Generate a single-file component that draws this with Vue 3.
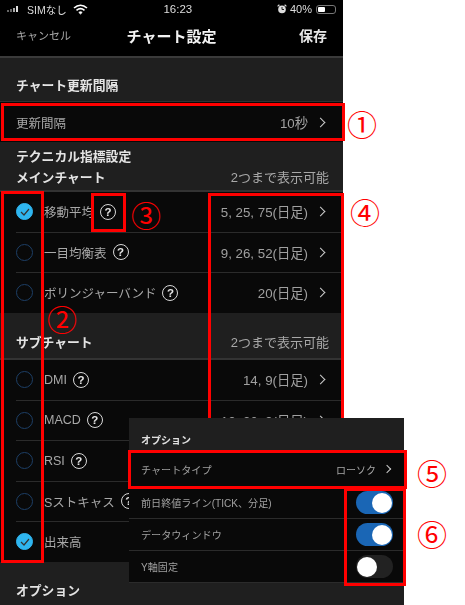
<template>
  <div class="stage">
    <div class="phone">
      <div class="status-bar">
        <div class="status-left">
          <svg class="signal" width="17" height="8" viewBox="0 0 17 8">
            <rect x="0" y="5" width="2" height="2" fill="#666" />
            <rect x="3" y="4" width="2" height="3" fill="#666" />
            <rect x="6" y="3" width="2" height="4" fill="#aaa" />
            <rect x="9" y="1" width="2" height="6" fill="#ddd" />
          </svg>
          <span class="carrier">SIMなし</span>
          <svg class="wifi" width="15" height="11" viewBox="0 0 15 11" fill="none" stroke="#fff" stroke-width="1.6">
            <path d="M1 4 C5 0.5 10 0.5 14 4" />
            <path d="M3.5 6.3 C6 4.2 9 4.2 11.5 6.3" />
            <path d="M5.8 8.4 C6.8 7.5 8.2 7.5 9.2 8.4 L7.5 10 Z" fill="#fff" stroke-width="0.8" />
          </svg>
        </div>
        <span class="clock">16:23</span>
        <div class="status-right">
          <svg width="10" height="10" viewBox="0 0 10 10">
            <circle cx="5" cy="5.4" r="3.8" fill="#ddd" />
            <path d="M5 3 V5.5 H7" stroke="#222" fill="none" />
            <path d="M0.6 2.4 L2.4 0.7 M9.4 2.4 L7.6 0.7" stroke="#ddd" stroke-width="1.2" />
          </svg>
          <span>40%</span>
          <span class="battery"><i></i></span>
        </div>
      </div>

      <div class="nav-bar">
        <span class="nav-cancel">キャンセル</span>
        <span class="nav-title">チャート設定</span>
        <span class="nav-save">保存</span>
      </div>

      <div class="section first-section"><span class="section-title">チャート更新間隔</span></div>
      <div class="row interval-row">
        <span class="row-label">更新間隔</span>
        <span class="row-value">10秒<b class="chevron"></b></span>
      </div>

      <div class="section tech-section">
        <span class="section-title">テクニカル指標設定</span>
        <div class="section-line">
          <span class="section-title">メインチャート</span>
          <span class="section-note">2つまで表示可能</span>
        </div>
      </div>
      <div class="list">
        <div v-for="item in mainItems" :key="item.name" class="row check-row">
          <div class="row-inner">
            <span class="radio" :class="{ on: item.on }">
              <svg v-if="item.on" width="12" height="10" viewBox="0 0 12 10" fill="none" stroke="#333" stroke-width="1.2">
                <path d="M2 5 L5 8 L10 2" />
              </svg>
            </span>
            <span class="row-label">{{ item.name }}<span v-if="item.help" class="help">?</span></span>
            <span class="row-value">{{ item.value }}<b class="chevron"></b></span>
          </div>
        </div>
      </div>

      <div class="section sub-section">
        <div class="section-line">
          <span class="section-title">サブチャート</span>
          <span class="section-note">2つまで表示可能</span>
        </div>
      </div>
      <div class="list">
        <div v-for="item in subItems" :key="item.name" class="row check-row">
          <div class="row-inner">
            <span class="radio" :class="{ on: item.on }">
              <svg v-if="item.on" width="12" height="10" viewBox="0 0 12 10" fill="none" stroke="#333" stroke-width="1.2">
                <path d="M2 5 L5 8 L10 2" />
              </svg>
            </span>
            <span class="row-label">{{ item.name }}<span v-if="item.help" class="help">?</span></span>
            <span v-if="item.value" class="row-value">{{ item.value }}<b class="chevron"></b></span>
          </div>
        </div>
      </div>

      <div class="section option-section"><span class="section-title">オプション</span></div>
    </div>

    <!-- 切り抜いて重ねたオプション画面 -->
    <div class="option-card">
      <div class="option-head"><span class="option-title">オプション</span></div>
      <div class="option-row type-row">
        <span>チャートタイプ</span>
        <span class="option-value">ローソク<b class="chevron"></b></span>
      </div>
      <div v-for="opt in options" :key="opt.name" class="option-row">
        <span>{{ opt.name }}</span>
        <span class="toggle" :class="{ on: opt.on }"><i></i></span>
      </div>
    </div>

    <!-- 赤枠と番号の注釈 -->
    <div class="mark mark-1"></div>
    <div class="mark mark-2"></div>
    <div class="mark mark-3"></div>
    <div class="mark mark-4"></div>
    <div class="mark mark-5"></div>
    <div class="mark mark-6"></div>
    <span class="num num-1">①</span>
    <span class="num num-2">②</span>
    <span class="num num-3">③</span>
    <span class="num num-4">④</span>
    <span class="num num-5">⑤</span>
    <span class="num num-6">⑥</span>
  </div>
</template>

<script setup>
const mainItems = [
  { name: '移動平均', help: true, value: '5, 25, 75(日足)', on: true },
  { name: '一目均衡表', help: true, value: '9, 26, 52(日足)', on: false },
  { name: 'ボリンジャーバンド', help: true, value: '20(日足)', on: false }
]

const subItems = [
  { name: 'DMI', help: true, value: '14, 9(日足)', on: false },
  { name: 'MACD', help: true, value: '12, 26, 9(日足)', on: false },
  { name: 'RSI', help: true, value: '', on: false },
  { name: 'Sストキャス', help: true, value: '', on: false },
  { name: '出来高', help: false, value: '', on: true }
]

const options = [
  { name: '前日終値ライン(TICK、分足)', on: true },
  { name: 'データウィンドウ', on: true },
  { name: 'Y軸固定', on: false }
]
</script>

<style>
html,
body {
  margin: 0;
  background: #fff;
}
</style>

<style scoped>
.stage {
  position: relative;
  width: 465px;
  height: 605px;
  overflow: hidden;
  background: #fff;
  font-family: "Liberation Sans", "Noto Sans CJK JP", sans-serif;
}

.phone {
  width: 343px;
  height: 605px;
  background: #1f1f1f;
  filter: blur(0.35px);
}

.status-bar {
  position: relative;
  height: 20px;
  background: #000;
  color: #ddd;
  font-size: 11px;
  display: flex;
  align-items: center;
  justify-content: space-between;
  padding: 0 7px 2px;
  box-sizing: border-box;
}

.status-left,
.status-right {
  display: flex;
  align-items: center;
  gap: 3px;
}

.carrier {
  font-size: 10.5px;
  margin-right: 3px;
}

.clock {
  font-size: 11.5px;
  margin-left: -9px;
}

.battery {
  width: 20px;
  height: 9px;
  border: 1px solid #777;
  border-radius: 3px;
  box-sizing: border-box;
  padding: 1px;
  margin-left: 1px;
}

.battery i {
  display: block;
  width: 7px;
  height: 100%;
  background: #fff;
  border-radius: 1px;
}

.nav-bar {
  height: 38px;
  box-sizing: border-box;
  background: #000;
  border-bottom: 2px solid #3a3a3a;
  display: flex;
  align-items: center;
  justify-content: space-between;
  padding: 0 16px 6px;
}

.nav-cancel {
  color: #a8a8a8;
  font-size: 11px;
  width: 72px;
}

.nav-title {
  color: #f2f2f2;
  font-size: 15px;
  font-weight: 700;
}

.nav-save {
  color: #e6e6e6;
  font-size: 14px;
  font-weight: 700;
  width: 72px;
  text-align: right;
}

.section {
  padding: 0 16px;
}

.first-section {
  height: 44px;
  box-sizing: border-box;
  padding-top: 19px;
  border-bottom: 1px solid #333;
}

.tech-section {
  height: 50px;
  box-sizing: border-box;
  padding-top: 6px;
  border-bottom: 2px solid #333;
}

.sub-section {
  height: 47px;
  box-sizing: border-box;
  padding-top: 21px;
  border-bottom: 2px solid #333;
}

.option-section {
  padding-top: 20px;
}

.section-title {
  display: block;
  color: #e4e4e4;
  font-size: 12.8px;
  line-height: 18px;
  font-weight: 700;
}

.section-line {
  display: flex;
  justify-content: space-between;
  align-items: center;
  margin-top: 3px;
}

.sub-section .section-line {
  margin-top: 0;
}

.section-note {
  color: #a8a8a8;
  font-size: 13px;
  line-height: 18px;
  margin-right: -2px;
}

.list {
  background: #090909;
}

.row {
  background: #090909;
  display: flex;
  align-items: center;
}

.interval-row {
  height: 40px;
  padding: 0 16px;
  justify-content: space-between;
  box-sizing: border-box;
}

.check-row {
  height: 40.4px;
  padding-left: 16px;
  box-sizing: border-box;
}

.radio {
  flex: none;
  width: 17px;
  height: 17px;
  margin-right: 11px;
  border: 1.2px solid #1d3f66;
  border-radius: 50%;
  display: flex;
  align-items: center;
  justify-content: center;
  box-sizing: border-box;
}

.radio.on {
  background: #2fb6f0;
  border-color: #2fb6f0;
}

.row-inner {
  flex: 1;
  height: 100%;
  padding-right: 16px;
  display: flex;
  align-items: center;
  border-bottom: 1px solid #2b2b2b;
}

.check-row:last-child .row-inner {
  border-bottom: 0;
}

.row-label {
  color: #a8a8a8;
  font-size: 12.5px;
  display: flex;
  align-items: center;
}

.row-value {
  color: #a0a0a0;
  font-size: 13.3px;
  display: flex;
  align-items: center;
  margin-left: auto;
}

.help {
  width: 16px;
  height: 16px;
  margin-left: 6px;
  border: 1.3px solid #d8d8d8;
  border-radius: 50%;
  box-sizing: border-box;
  color: #e4e4e4;
  font-size: 11.5px;
  font-weight: 700;
  line-height: 14px;
  text-align: center;
}

.chevron {
  display: inline-block;
  width: 6px;
  height: 6px;
  margin: 0 3px 0 9px;
  border-top: 1.2px solid #ccc;
  border-right: 1.2px solid #ccc;
  transform: rotate(45deg);
}

.option-card {
  position: absolute;
  left: 129px;
  top: 418px;
  width: 275px;
  height: 187px;
  background: #1f1f1f;
  filter: blur(0.35px);
}

.option-head {
  height: 34px;
  box-sizing: border-box;
  padding: 16px 12px 0;
}

.option-title {
  color: #e0e0e0;
  font-size: 10px;
  font-weight: 700;
  line-height: 14px;
  display: block;
}

.option-row {
  height: 32px;
  background: #090909;
  display: flex;
  align-items: center;
  justify-content: space-between;
  padding: 0 12px;
  box-sizing: border-box;
  border-bottom: 1px solid #2b2b2b;
  color: #a0a0a0;
  font-size: 10.1px;
}

.type-row {
  height: 35px;
}

.option-value {
  color: #a8a8a8;
  font-size: 10px;
  display: flex;
  align-items: center;
}

.option-value .chevron {
  margin: 0 2px 0 8px;
  width: 5px;
  height: 5px;
}

.toggle {
  width: 37px;
  height: 23px;
  margin-right: -1px;
  border-radius: 12px;
  background: #222;
  position: relative;
}

.toggle i {
  position: absolute;
  left: 1px;
  top: 1.5px;
  width: 20px;
  height: 20px;
  border-radius: 50%;
  background: #fff;
}

.toggle.on {
  background: #1a66b5;
}

.toggle.on i {
  left: 16px;
}

.mark {
  position: absolute;
  border: 3px solid #f00;
  box-sizing: border-box;
}

.mark-1 {
  left: 1px;
  top: 103px;
  width: 344px;
  height: 38px;
}

.mark-2 {
  left: 1px;
  top: 191px;
  width: 43px;
  height: 372px;
}

.mark-3 {
  left: 91px;
  top: 193px;
  width: 35px;
  height: 39px;
}

.mark-4 {
  left: 208px;
  top: 193px;
  width: 136px;
  height: 225px;
  border-bottom: 0;
}

.mark-5 {
  left: 128px;
  top: 450px;
  width: 279px;
  height: 39px;
}

.mark-6 {
  left: 344px;
  top: 488px;
  width: 62px;
  height: 98px;
}

.num {
  position: absolute;
  color: #f00;
  font-family: "Noto Sans CJK JP", sans-serif;
  font-size: 30px;
  line-height: 30px;
}

.num-1 {
  left: 347px;
  top: 108px;
}

.num-2 {
  left: 47px;
  top: 303px;
}

.num-3 {
  left: 131px;
  top: 199px;
}

.num-4 {
  left: 350px;
  top: 196px;
}

.num-5 {
  left: 417px;
  top: 457px;
}

.num-6 {
  left: 417px;
  top: 518px;
}
</style>
